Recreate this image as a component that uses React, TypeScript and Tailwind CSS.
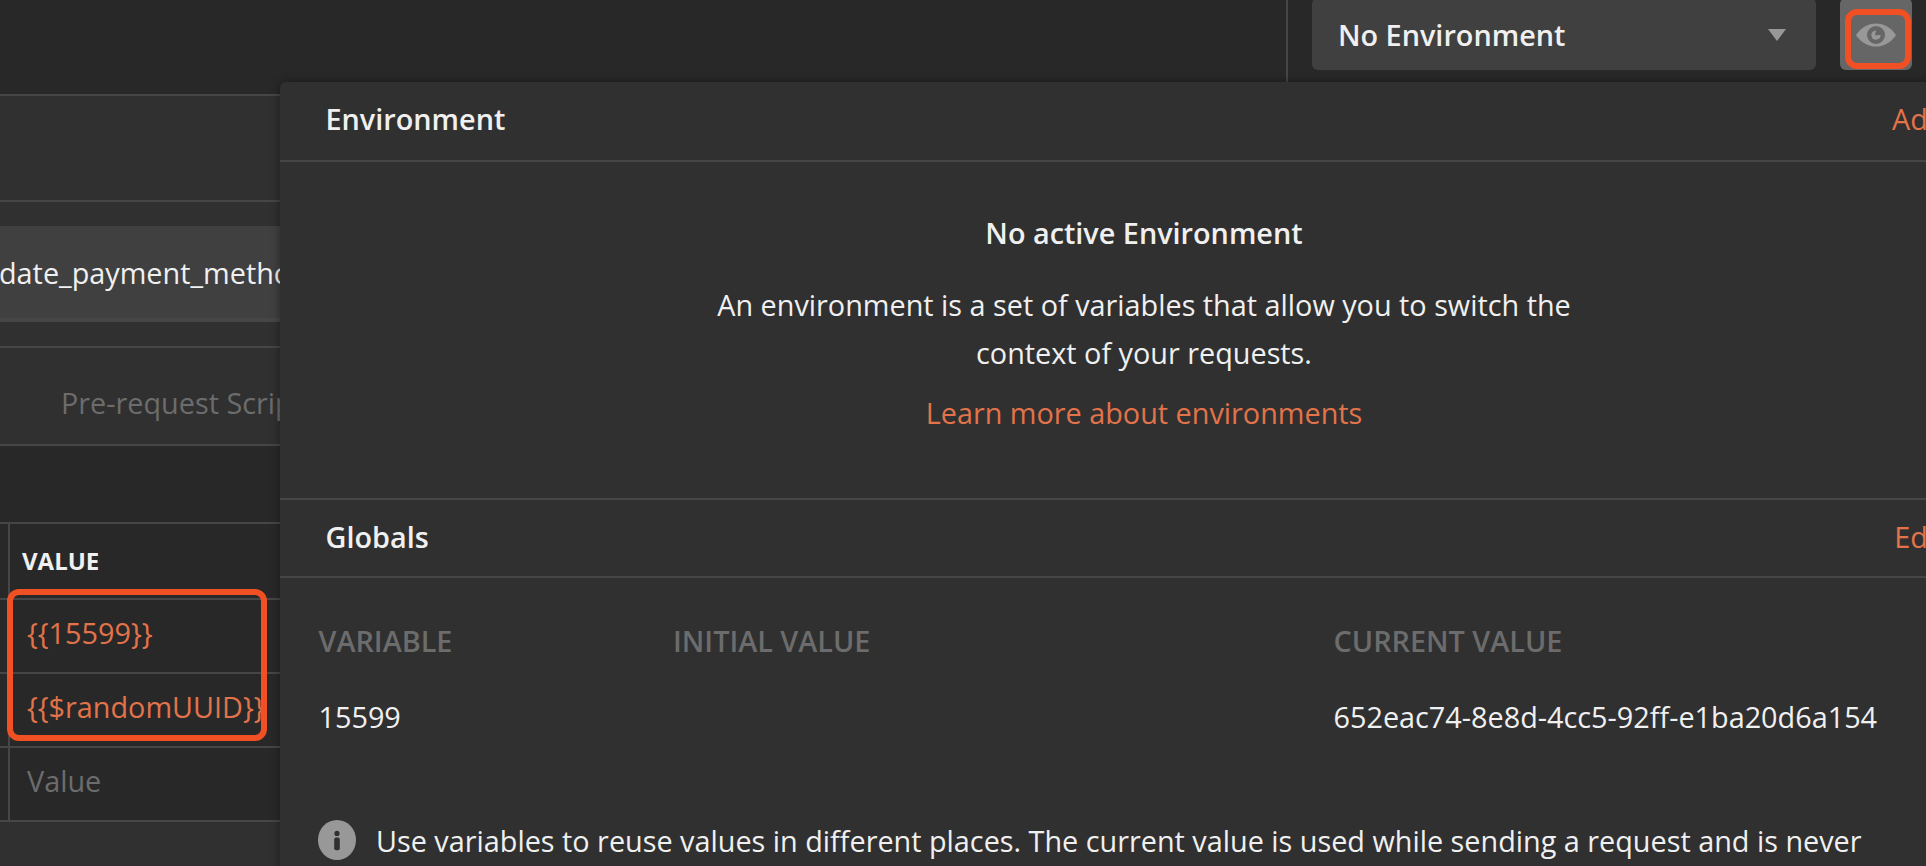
import React from "react";

const FONT = "font-['Open_Sans','Noto_Sans',sans-serif]";

function EyeIcon() {
  return (
    <svg width="40" height="24" viewBox="0 0 40 24" className="block">
      <path
        d="M0 12C5 4.5 12 0.4 20 0.4S35 4.5 40 12C35 19.5 28 23.6 20 23.6S5 19.5 0 12Z"
        fill="#989898"
      />
      <circle cx="20" cy="12" r="9" fill="#666666" />
      <path d="M20 7.4V12H24.6A4.6 4.6 0 1 1 18 7.9Z" fill="#989898" />
      <circle cx="20.8" cy="10.8" r="1.8" fill="#666666" />
    </svg>
  );
}

function InfoIcon() {
  return (
    <svg width="38" height="40" viewBox="0 0 38 40" className="mt-[-1px] block shrink-0">
      <ellipse cx="19" cy="20" rx="19" ry="20" fill="#989898" />
      <circle cx="19" cy="13.4" r="2.6" fill="#303030" />
      <rect x="16.2" y="17.4" width="5.6" height="12.8" rx="2" fill="#303030" />
    </svg>
  );
}

function TopBar() {
  return (
    <header className="flex h-24 justify-end border-b-2 border-[#464646] bg-[#282828]">
      <div className="flex w-[640px] items-start border-l-2 border-[#464646] pl-6">
        <div className="-mt-0.5 flex h-[72px] w-[504px] items-start justify-between rounded-md bg-[#404040] pr-[30px] pl-[26px]">
          <span className="mt-[17px] leading-[39px] font-semibold">No Environment</span>
          <svg width="18" height="12" viewBox="0 0 18 12" className="mt-[31px] block">
            <path d="M0 0H18L9 12Z" fill="#989898" />
          </svg>
        </div>
        <div className="-mt-0.5 ml-6 flex h-[72px] w-[72px] justify-center rounded-md bg-[#666666] pt-[25px]">
          <EyeIcon />
        </div>
      </div>
    </header>
  );
}

function ValueRow({ text, muted }: { text: string; muted?: boolean }) {
  return (
    <div className="flex h-[74px] border-b-2 border-[#464646]">
      <div className="w-2 shrink-0" />
      <div className="flex-1 border-l-2 border-[#464646] pt-[13px] pl-[17px]">
        <span className={muted ? "block leading-[39px] text-[#6c6c6c]" : "block leading-[39px] text-[#e2734a]"}>{text}</span>
      </div>
    </div>
  );
}

function RequestPane() {
  return (
    <main className="flex-1 bg-[#303030] whitespace-nowrap">
      <div className="h-[106px] border-b-2 border-[#464646]" />
      <div className="h-[146px] border-b-2 border-[#464646] pt-6">
        <div className="h-24 border-b-4 border-[#464646] bg-[#404040] pt-[27px]">
          <span className="-ml-px block leading-[39px]">date_payment_method</span>
        </div>
      </div>
      <div className="h-[98px] border-b-2 border-[#464646] pt-[35px] pl-[61px]">
        <span className="block leading-[39px] text-[#6c6c6c]">Pre-request Script</span>
      </div>
      <div className="bg-[#282828] pt-[76px]">
        <div className="flex h-[78px] border-y-2 border-[#464646]">
          <div className="w-2 shrink-0" />
          <div className="flex-1 border-l-2 border-[#464646] pt-5 pl-3">
            <span className="block text-[24px] leading-[33px] font-bold">VALUE</span>
          </div>
        </div>
        <ValueRow text="{{15599}}" />
        <ValueRow text="{{$randomUUID}}" />
        <ValueRow text="Value" muted />
      </div>
    </main>
  );
}

function SectionHeader({ title, action, className }: { title: string; action: string; className: string }) {
  return (
    <div className={`flex items-start justify-between border-b-2 border-[#464646] pt-[17px] pr-[62.5px] pl-[45.5px] ${className}`}>
      <h2 className="leading-[39px] font-semibold">{title}</h2>
      <a className="leading-[39px] text-[#e2734a]">{action}</a>
    </div>
  );
}

function EnvironmentPopup() {
  return (
    <section className="absolute top-[82px] left-[280px] flex h-[900px] w-[1728px] flex-col rounded-md bg-[#303030] whitespace-nowrap shadow-[0_0_10px_rgba(0,0,0,0.4)]">
      <SectionHeader title="Environment" action="Add" className="h-20" />
      <div className="flex h-[338px] flex-col items-center border-b-2 border-[#464646] pt-[51px] text-center">
        <h3 className="leading-[39px] font-semibold">No active Environment</h3>
        <p className="mt-[29px] leading-[48px]">
          An environment is a set of variables that allow you to switch the
          <br />
          context of your requests.
        </p>
        <a className="mt-4 leading-[39px] text-[#e2734a]">Learn more about environments</a>
      </div>
      <SectionHeader title="Globals" action="Edit" className="h-[78px]" />
      <div className="pt-[43px] pl-[38.5px]">
        <div className="grid grid-cols-[354.5px_660.5px_1fr] gap-y-[37px] leading-[39px]">
          <span className="font-semibold text-[#6c6c6c]">VARIABLE</span>
          <span className="font-semibold text-[#6c6c6c]">INITIAL VALUE</span>
          <span className="font-semibold text-[#6c6c6c]">CURRENT VALUE</span>
          <span>15599</span>
          <span />
          <span>652eac74-8e8d-4cc5-92ff-e1ba20d6a154</span>
        </div>
        <div className="mt-[85px] -ml-[0.5px] flex items-start gap-5">
          <InfoIcon />
          <p className="leading-[39px]">
            Use variables to reuse values in different places. The current value is used while sending a request and is never
          </p>
        </div>
      </div>
    </section>
  );
}

export default function App() {
  return (
    <div className={`relative flex h-[866px] w-[1926px] flex-col overflow-hidden bg-[#303030] text-[28.8px] text-[#f0f0f0] ${FONT}`}>
      <TopBar />
      <RequestPane />
      <EnvironmentPopup />
      <div className="absolute top-[588.5px] left-[6.5px] h-[152.5px] w-[260.5px] rounded-[12px] border-6 border-[#f05023]" />
      <div className="absolute top-[9px] left-[1845px] h-[60px] w-[66px] rounded-[12px] border-6 border-[#f05023]" />
    </div>
  );
}
